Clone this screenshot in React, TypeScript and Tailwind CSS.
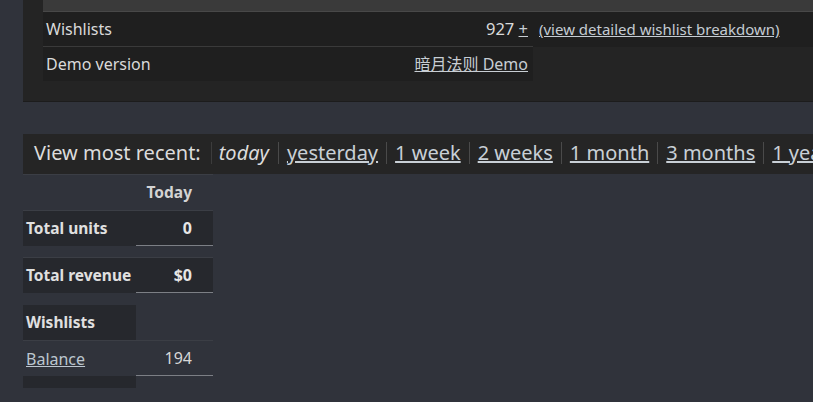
const periods = ["yesterday", "1 week", "2 weeks", "1 month", "3 months", "1 year"];

function Cell({ children, className = "" }: { children?: React.ReactNode; className?: string }) {
  return <div className={`flex items-center ${className}`}>{children}</div>;
}

export default function App() {
  return (
    <div
      className="w-[813px] h-[402px] overflow-hidden bg-[#30333b] text-[#dadada]"
      style={{ fontFamily: '"Noto Sans", "Noto Sans CJK SC", sans-serif' }}
    >
      {/* top summary panel */}
      <div className="ml-[23px] bg-[#242424] pl-[20px] pb-[20px] shadow-[0_1px_0_#1c1c1c]">
        <div className="h-[12px] bg-[#3a3a3a] border-b border-[#484848]" />
        <div className="flex h-[35px]">
          <Cell className="w-[490px] justify-between pl-[3px] pr-[5px] bg-[#1f1f1f] border-b border-[#3a3a3a] text-[16px]">
            <span>Wishlists</span>
            <span className="text-[16.5px]">
              927 <a className="underline text-[#c8ced4]">+</a>
            </span>
          </Cell>
          <Cell className="flex-1 pl-[6px] bg-[#1f1f1f] text-[15px] text-[#c5ccd3]">
            <a className="underline">(view detailed wishlist breakdown)</a>
          </Cell>
        </div>
        <Cell className="w-[490px] h-[34px] justify-between pl-[3px] pr-[5px] bg-[#1f1f1f] text-[16px]">
          <span>Demo version</span>
          <a className="underline text-[#c8ced4]">暗月法则 Demo</a>
        </Cell>
      </div>

      {/* period picker */}
      <div className="ml-[23px] mt-[33px] h-[40px] bg-[#252525] flex items-center pl-[11px] pb-[3px] text-[20px] text-[#dcdcdc] whitespace-nowrap">
        <span className="pr-[10px]">View most recent:</span>
        <span className="border-l border-[#3c3c3c] pl-[7px] pr-[9px] italic leading-[22px]">today</span>
        {periods.map((p) => (
          <span key={p} className="border-l border-[#4a4a4a] pl-[8px] pr-[8px] leading-[22px]">
            <a className="underline text-[#c9d0d6]">{p}</a>
          </span>
        ))}
      </div>

      {/* daily table */}
      <div className="ml-[23px] w-[190px] grid grid-cols-[113px_77px] text-[16px] border-t border-[#3b3e45]">
        <Cell className="h-[36px] border-b border-[#3b3e45]" />
        <Cell className="h-[36px] justify-end pr-[21px] font-bold text-[15.5px] text-[#d4d4d4] border-b border-[#3b3e45]">Today</Cell>

        <Cell className="h-[35px] pl-[3px] bg-[#26282d] font-bold text-[15.5px] text-[#e0e0e0]">Total units</Cell>
        <Cell className="h-[35px] justify-end pr-[21px] bg-[#26282d] font-bold text-[#e6e6e6] border-b border-[#7c7f85]">0</Cell>

        <div className="col-span-2 h-[12px] border-b border-[#3b3e45]" />

        <Cell className="h-[35px] pl-[3px] bg-[#26282d] font-bold text-[15.5px] text-[#e0e0e0]">Total revenue</Cell>
        <Cell className="h-[35px] justify-end pr-[21px] bg-[#26282d] font-bold text-[#e6e6e6] border-b border-[#7c7f85]">$0</Cell>

        <div className="col-span-2 h-[12px]" />

        <Cell className="h-[36px] pl-[3px] pt-[1px] bg-[#26282d] font-bold text-[15.5px] text-[#e0e0e0] border-b border-[#3b3e45]">Wishlists</Cell>
        <Cell className="h-[36px] border-b border-[#3b3e45]" />

        <Cell className="h-[35px] pl-[3px]">
          <a className="underline text-[#bcc6cf]">Balance</a>
        </Cell>
        <Cell className="h-[35px] justify-end pr-[21px] text-[#d8d8d8] border-b border-[#7c7f85]">194</Cell>

        <div className="h-[12px] bg-[#26282d]" />
        <div className="h-[12px]" />
      </div>
    </div>
  );
}
